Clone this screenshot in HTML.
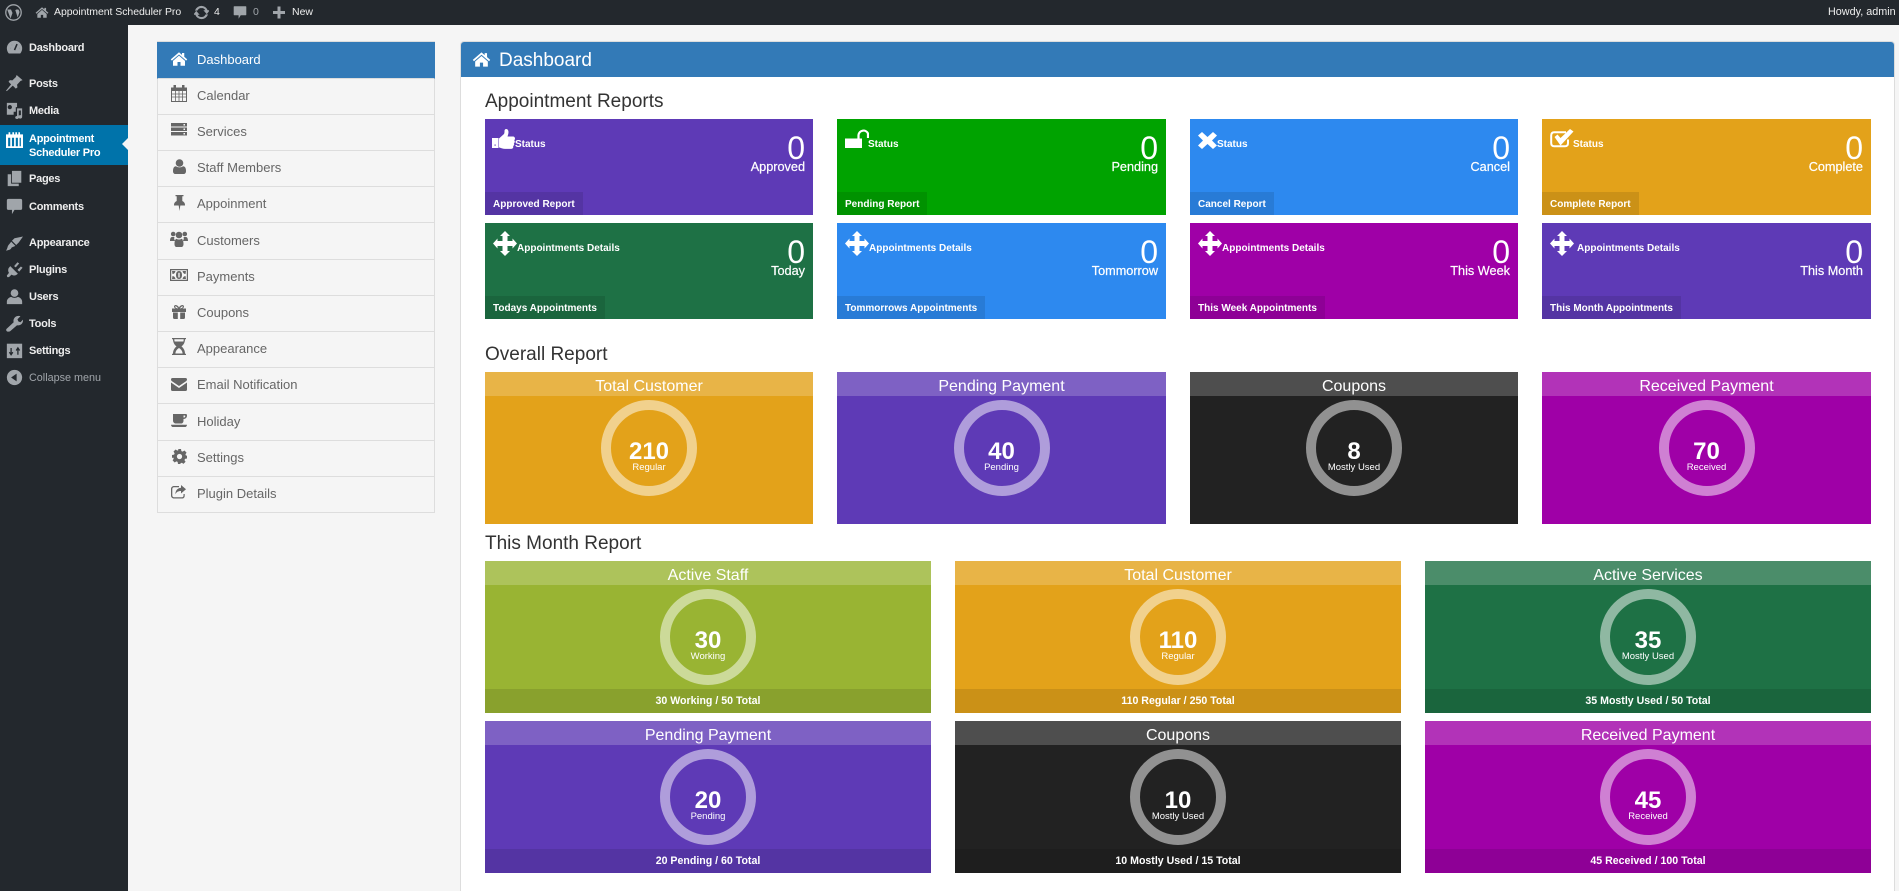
<!DOCTYPE html>
<html lang="en"><head><meta charset="utf-8"><title>Appointment Scheduler Pro</title>
<style>
html,body{margin:0;padding:0;width:1899px;height:891px;overflow:hidden;background:#f5f5f5;font-family:"Liberation Sans",Arial,sans-serif}
*{box-sizing:border-box}
.a{position:absolute}
svg{position:absolute;fill:currentColor;display:block}
.t{position:absolute;height:20px;line-height:20px;white-space:nowrap}
#bar{left:0;top:0;width:1899px;height:25px;background:#23282d;color:#a0a5aa}
#bar .t{font-size:10.5px;color:#eee;top:1.5px}
#side{left:0;top:25px;width:128px;height:866px;background:#23282d}
.m{left:29px;font-size:11px;font-weight:bold;color:#eee;letter-spacing:-.25px}
.mi{color:#a0a5aa;left:6px;width:17px;height:17px}
.li{position:absolute;left:157px;width:278px;background:#f5f5f5;border-style:solid;border-color:#ddd;border-width:0 1px 1px 1px}
.l{left:197px;font-size:13px;color:#666}
.ic{color:#666;left:170px;width:18px;height:18px}
.h2{left:485px;font-size:19px;color:#333}
.c{position:absolute;color:#fff;overflow:hidden}
.c svg{color:#fff}
.lb{position:absolute;font-size:10px;font-weight:bold;line-height:16px;white-space:nowrap}
.n{position:absolute;right:8px;font-size:32px;line-height:32px;top:13px}
.s{position:absolute;right:8px;font-size:12.7px;line-height:16px;top:40px;white-space:nowrap;-webkit-text-stroke:.2px #fff}
.f{position:absolute;left:0;bottom:0;height:23px;line-height:25px;padding:0 8px;font-size:10px;font-weight:bold;background:rgba(0,0,0,.1);white-space:nowrap}
.hd{position:absolute;left:0;top:0;right:0;height:24px;line-height:30px;text-align:center;font-size:16px;background:rgba(255,255,255,.2)}
.r{position:absolute;top:28px;left:50%;margin-left:-48px;width:96px;height:96px;border:10px solid rgba(255,255,255,.5);border-radius:50%;text-align:center}
.r b{position:absolute;left:-10px;right:-10px;top:28px;font-size:24px;line-height:28px}
.r span{position:absolute;left:-10px;right:-10px;top:52px;font-size:9.5px;line-height:12px}
.ft{position:absolute;left:0;right:0;bottom:0;height:24px;line-height:25px;text-align:center;font-size:10.6px;font-weight:bold;background:rgba(0,0,0,.1)}
</style></head><body>
<svg width="0" height="0" style="position:absolute">
<symbol id="home" viewBox="0 0 24 24"><path d="M12 3L1 12.5l1.5 1.7L12 6l9.500 8.200 1.500-1.700L19 9V4h-3v2.500zM12 7.500l-8 7V21h6v-5h4v5h6v-6.500z"/></symbol>
<symbol id="move" viewBox="0 0 24 25"><path d="M12 0l5 5H14.500V10h5V7.500l4.500 5-4.500 5V15h-5v5h2.500l-5 5-5-5h2.500v-5h-5v2.500L0 12.500l4.500-5V10h5V5H7z"/></symbol>
</svg>

<div class="a" id="bar">
 <svg style="left:5px;top:4px" width="17" height="17" viewBox="0 0 17 17"><circle cx="8.500" cy="8.500" r="7.700" fill="none" stroke="currentColor" stroke-width="1.300"/><path d="M2.200 5.500l3.300 9 2-5.500L6 5.500h5.500l-1.200.6 2.400 7.400 1.700-5c.3-1-.4-2-1-3z"/></svg>
 <svg style="left:35px;top:5px;color:#a0a5aa" width="14" height="15" viewBox="0 0 24 24"><use href="#home"/></svg>
 <div class="t" style="left:54px;font-size:10.5px;letter-spacing:-.05px">Appointment Scheduler Pro</div>
 <svg style="left:194px;top:5px" width="15" height="15" viewBox="0 0 20 20"><path stroke="currentColor" stroke-width=".9" d="M10 3.500a6.500 6.500 0 0 1 6 4h-2.500l3.500 4 3-4h-2A8.500 8.500 0 0 0 2 7h2.300A6.500 6.500 0 0 1 10 3.500zM10 16.500a6.500 6.500 0 0 1-6-4h2.500L3 8.500l-3 4h2A8.500 8.500 0 0 0 18 13h-2.300a6.500 6.500 0 0 1-5.700 3.500z"/></svg>
 <div class="t" style="left:214px">4</div>
 <svg style="left:233px;top:5px" width="14" height="15" viewBox="0 0 20 20"><path d="M2 1h16a1 1 0 0 1 1 1v11a1 1 0 0 1-1 1h-7l-3 5v-5H2a1 1 0 0 1-1-1V2a1 1 0 0 1 1-1z"/></svg>
 <div class="t" style="left:253px;color:#a0a5aa">0</div>
 <svg style="left:273px;top:6px" width="12" height="13" viewBox="0 0 12 12"><path d="M4.500 0h3v4.500H12v3H7.500V12h-3V7.500H0v-3h4.500z"/></svg>
 <div class="t" style="left:292px">New</div>
 <div class="t" style="left:1828px;font-size:10.8px">Howdy, admin</div>
</div>

<div class="a" id="side">
 <div class="a" style="left:0;top:100px;width:128px;height:40px;background:#0073aa"></div>
 <div class="a" style="left:122px;top:113px;width:0;height:0;border-style:solid;border-color:transparent #f5f5f5 transparent transparent;border-width:6px 6px 6px 0"></div>
</div>

<!-- wp icons -->
<svg class="mi" style="top:39px" viewBox="0 0 20 20"><path d="M10 2a9 9 0 0 0-9 9c0 2.500 1 4.500 2.300 6h13.400A9 9 0 0 0 19 11a9 9 0 0 0-9-9z"/><path d="M10 13l3-7M5 11h.1M15.500 11h.1M7 7h.1" stroke="#23282d" stroke-width="1.800" fill="none"/></svg>
<svg class="mi" style="top:75px" viewBox="0 0 20 20"><path d="M12.500 0l7 6-2.500 1-4 4.500.5 3-2 1.500-3.500-3.500L1 19l-1-.5 6-7.500-3-3 1.500-2 3 .3L11.500 2.500z"/></svg>
<svg class="mi" style="top:102px" viewBox="0 0 20 20"><path fill-rule="evenodd" d="M1 1h12v5h-1.500v5.500H9V15H1zM4.500 3.500a2.500 2.500 0 1 0 0 5 2.500 2.500 0 0 0 0-5z"/><path d="M13 7.500h6v10c0 1.200-1 2-2.200 2s-2.300-.8-2.300-2 1-2 2.300-2c.3 0 .5 0 .7.100V10H15v8.500c0 .8-.8 1.500-2 1.500s-2.200-.8-2.200-1.800 1-1.700 2.200-1.700z"/></svg>
<svg class="a mi" style="top:131px;color:#fff" viewBox="0 0 20 20"><path fill-rule="evenodd" d="M0 4h3V1.500h2V4h2.500V1.500h2V4h1.500V1.500h2V4h1.500V1.500h2V4H20v16H0zM2.500 8v10h2.500V8zM7 8v10h2.500V8zM11.500 8v10H14V8zM16 8v10h1.500V8z"/></svg>
<svg class="mi" style="top:170px" viewBox="0 0 20 20"><path d="M7 1h11v14H7zM2 5h4v11h9v3H2z"/></svg>
<svg class="mi" style="top:198px" viewBox="0 0 20 20"><path d="M3 1h14a2 2 0 0 1 2 2v9a2 2 0 0 1-2 2h-7l-3 5v-5H3a2 2 0 0 1-2-2V3a2 2 0 0 1 2-2z"/></svg>
<svg class="mi" style="top:234px" viewBox="0 0 20 20"><path d="M20 3L10 5 7 8l5 5 3-3zM6 9l5 5c-2.500 1.500-4 1-5 3-.7 1.300-3 2-6 2.500 2-2.500 1.500-4.500 3-6.500C4 11.500 5 11 6 9z"/></svg>
<svg class="mi" style="top:261px" viewBox="0 0 20 20"><path d="M5 6l9 9-2 1.500c-2 1-4 .5-5.500-.5L3.500 19H1.500l-.5-2 2.500-3c-1-1.500-1.300-3.500-.5-5.500zM9.500 6l4-4.500 2 1.500-4 4.500zM13.500 10.500l4-4 2 1.500-4 4.500z"/></svg>
<svg class="mi" style="top:288px" viewBox="0 0 20 20"><circle cx="10" cy="6" r="4.500"/><path d="M1 19v-3c0-3 3-5 5-5.500 2.500 1.500 5.500 1.500 8 0 2 .5 5 2.500 5 5.500v3z"/></svg>
<svg class="mi" style="top:315px" viewBox="0 0 20 20"><path d="M2.500 19.500a2 2 0 0 1-2-3L9 8.500C8 5 10.500 1 15 1c.8 0 1.500.2 2 .5L13.500 5l1 2.500L17 8.500 20 5.500c.5 4-3 7.500-7 6.500L5 19c-.7.500-1.500.7-2.500.5z"/></svg>
<svg class="mi" style="top:342px" viewBox="0 0 20 20"><path d="M1 2h18v17H1z"/><path d="M6 7v8M4 12l2 3 2-3M14 15V7M12 10l2-3 2 3" stroke="#23282d" stroke-width="1.500" fill="none"/></svg>
<svg class="mi" style="top:369px" viewBox="0 0 20 20"><circle cx="10" cy="10" r="9"/><path d="M12.500 5.500v9L6 10z" fill="#23282d"/></svg>

<div class="t m" style="top:38px">Dashboard</div>
<div class="t m" style="top:74px">Posts</div>
<div class="t m" style="top:101px">Media</div>
<div class="t m" style="top:129px;color:#fff">Appointment</div>
<div class="t m" style="top:143px;color:#fff">Scheduler Pro</div>
<div class="t m" style="top:169px">Pages</div>
<div class="t m" style="top:197px">Comments</div>
<div class="t m" style="top:233px">Appearance</div>
<div class="t m" style="top:260px">Plugins</div>
<div class="t m" style="top:287px">Users</div>
<div class="t m" style="top:314px">Tools</div>
<div class="t m" style="top:341px">Settings</div>
<div class="t m" style="top:368px;font-weight:normal;color:#a0a5aa;letter-spacing:0;font-size:10.8px">Collapse menu</div>

<!-- left list -->
<div class="a" style="left:157px;top:41px;width:278px;height:1px;background:#ddd"></div>
<div class="li" style="top:42px;height:37px;background:#337ab7;border-color:#337ab7 #337ab7 #ddd"></div>
<div class="li" style="top:79px;height:36px"></div>
<div class="li" style="top:115px;height:36px"></div>
<div class="li" style="top:151px;height:36px"></div>
<div class="li" style="top:187px;height:36px"></div>
<div class="li" style="top:223px;height:37px"></div>
<div class="li" style="top:260px;height:36px"></div>
<div class="li" style="top:296px;height:36px"></div>
<div class="li" style="top:332px;height:36px"></div>
<div class="li" style="top:368px;height:36px"></div>
<div class="li" style="top:404px;height:37px"></div>
<div class="li" style="top:441px;height:36px"></div>
<div class="li" style="top:477px;height:36px"></div>

<svg style="left:170px;top:50px;color:#fff" width="18" height="18" viewBox="0 0 24 24"><use href="#home"/></svg>
<svg class="ic" style="top:85px;width:16px;height:17px;left:171px" viewBox="0 0 16 17"><path fill-rule="evenodd" d="M0 2.500h2.500V0h2.500v2.500h6V0h2.500v2.500H16V17H0zM1 6v10h14V6z"/><path d="M1 9h14M1 12h14M4.500 6v10M8 6v10M11.500 6v10" stroke="#666" stroke-width=".8" fill="none"/></svg>
<svg class="ic" style="top:123px;width:16px;height:13px;left:171px" viewBox="0 0 16 13"><path fill-rule="evenodd" d="M0 0h16v3.500H0zM12.500 1v1.500H14V1zM0 4.500h16V8H0zM12.500 5.500V7H14V5.500zM0 9h16v3.500H0zM12.500 10v1.500H14V10z"/></svg>
<svg class="ic" style="top:159px;width:13px;height:15px;left:172.500px" viewBox="0 0 13 15"><circle cx="6.500" cy="4" r="3.800"/><path d="M0 12c0-3 1-4.500 3-4.700 2 1.500 5 1.500 7 0 2 .2 3 1.700 3 4.700 0 2-1 3-2.500 3h-8C1 15 0 14 0 12z"/></svg>
<svg class="ic" style="top:195px;width:11px;height:16px;left:174px" viewBox="0 0 11 16"><path d="M1.500 0h8v1.300H8.300V6c1.500.8 2.700 2 2.700 3.700V10.500H6.300L5.500 16 4.700 10.500H0V9.700C0 8 1.200 6.800 2.700 6V1.300H1.500z"/></svg>
<svg class="ic" style="top:231px;width:18px;height:16px;left:170px" viewBox="0 0 18 16"><circle cx="3.200" cy="3" r="2.300"/><circle cx="14.800" cy="3" r="2.300"/><circle cx="9" cy="4" r="3.300"/><path d="M0 10c0-2.500.8-4 2-4h2.500c-.5 1-.5 2.800 1 4H0zM18 10c0-2.500-.8-4-2-4h-2.500c.5 1 .5 2.800-1 4zM4.500 13c0-3 .8-5 2-5.300 1.500 1 3.500 1 5 0 1.200.3 2 2.300 2 5.300 0 2-1 3-2 3H6.500c-1 0-2-1-2-3z"/></svg>
<svg class="ic" style="top:269px;width:18px;height:12px;left:170px" viewBox="0 0 18 12"><path fill-rule="evenodd" d="M0 0h18v12H0zM1.200 1.200v9.600h15.600V1.200z"/><path d="M2 2h3.500C5 4 4 5 2.500 5zM16 2h-3.500c.5 2 1.500 3 3 3zM2 10h3.500C5 8 4 7 2.500 7zM16 10h-3.500c.5-2 1.500-3 3-3z"/><path fill-rule="evenodd" d="M9 2c2 0 3 1.800 3 4s-1 4-3 4-3-1.800-3-4 1-4 3-4zM8.300 3.800V8.500h1.400V3.800z"/></svg>
<svg class="ic" style="top:305px;width:14px;height:14px;left:172px" viewBox="0 0 14 14"><path fill-rule="evenodd" d="M0 3.500h3.500C2.500 3 2 2.200 2 1.500 2 .7 2.700 0 3.700 0 5 0 6.300 1.200 7 2.500 7.700 1.200 9 0 10.300 0c1 0 1.700.7 1.700 1.500 0 .7-.5 1.500-1.500 2H14V7H0zM3.500 1.300c-.5 0-.5.8.3 1.500.4.300 1.500.6 2.200.7C5.500 2.500 4.500 1.300 3.500 1.300zM10.500 1.300c-1 0-2 1.200-2.500 2.200.7-.1 1.800-.4 2.200-.7.8-.7.8-1.500.3-1.500z"/><path d="M1 7.500h4.800V14H2.500C1.500 14 1 13.400 1 12.500zM8.200 7.500H13v5c0 .9-.5 1.500-1.500 1.500H8.200z"/></svg>
<svg class="ic" style="top:338px;width:14px;height:17px;left:172px" viewBox="0 0 14 17"><path fill-rule="evenodd" d="M0 0h14v1.300h-1c0 3-1.300 5.500-3.500 7.200 2.200 1.700 3.500 4.200 3.500 7.200h1V17H0v-1.300h1c0-3 1.300-5.500 3.500-7.200C2.300 6.800 1 4.300 1 1.300H0zM2.300 1.300c0 .8.100 1.500.3 2.200h8.800c.2-.7.300-1.400.3-2.200zM7 10c-2 1.300-3.500 3-3.600 5.500h7.200C10.500 13 9 11.300 7 10z"/></svg>
<svg class="ic" style="top:378px;width:16px;height:13px;left:171px" viewBox="0 0 16 13"><path d="M0 1.500C0 .5.600 0 1.500 0h13c.9 0 1.500.5 1.500 1.500 0 .7-.4 1.300-1 1.700L8 8 1 3.200C.4 2.800 0 2.200 0 1.500zM0 4.500L8 10l8-5.500v7c0 1-.6 1.500-1.500 1.500h-13C.6 13 0 12.500 0 11.500z"/></svg>
<svg class="ic" style="top:414px;width:16px;height:13px;left:171px" viewBox="0 0 16 13"><path fill-rule="evenodd" d="M2 0h13c.7 0 1 .7 1 1.500 0 2-1.300 3.500-3.500 3.500v1.500c0 2-1 3-2.500 3H5c-1.500 0-3-1-3-3zM12.500 1.500v2c1 0 1.800-.5 1.800-1.300 0-.5-.3-.7-.7-.7z"/><path d="M0 10.700h16c0 1-.8 2.300-2 2.300H2c-1.200 0-2-1.300-2-2.300z"/></svg>
<svg class="ic" style="top:449px;width:15px;height:15px;left:172px" viewBox="0 0 20 20"><path fill-rule="evenodd" d="M8 0h4l.5 2.800 1.700.7L16.600 2l2.800 2.800-1.500 2.300.7 1.700L20 8.800v3.800l-2.600.5-.8 1.700 1.500 2.200-2.800 2.800-2.200-1.500-1.700.7L11 20H8l-.5-2.800-1.700-.7-2.200 1.500-2.800-2.800 1.500-2.200-.7-1.700L0 12V8l2.800-.5.7-1.700L2 3.400 4.800.6l2.300 1.500 1.700-.7zM10 6.500a3.500 3.500 0 1 0 0 7 3.500 3.500 0 0 0 0-7z"/></svg>
<svg class="ic" style="top:485px;width:15px;height:14px;left:171px" viewBox="0 0 15 14"><path fill-rule="evenodd" d="M3 1h5v1.200H3C2 2.200 1.300 3 1.300 4v6.500c0 1 .7 1.700 1.700 1.700h8c1 0 1.500-.7 1.500-1.700V9h1.200v1.500c0 2-1 3-2.700 3H3c-1.700 0-3-1.200-3-3V4C0 2.300 1.300 1 3 1z"/><path d="M10 0l5 4.200-5 4.300V6C7 6 5.500 7 4.300 9.300 4.500 6 6 3 10 2.700z"/></svg>

<div class="t l" style="top:50px;color:#fff">Dashboard</div>
<div class="t l" style="top:86px">Calendar</div>
<div class="t l" style="top:122px">Services</div>
<div class="t l" style="top:158px">Staff Members</div>
<div class="t l" style="top:194px">Appoinment</div>
<div class="t l" style="top:231px">Customers</div>
<div class="t l" style="top:267px">Payments</div>
<div class="t l" style="top:303px">Coupons</div>
<div class="t l" style="top:339px">Appearance</div>
<div class="t l" style="top:375px">Email Notification</div>
<div class="t l" style="top:412px">Holiday</div>
<div class="t l" style="top:448px">Settings</div>
<div class="t l" style="top:484px">Plugin Details</div>

<!-- main panel -->
<div class="a" style="left:460px;top:41px;width:1435px;height:850px;background:#fff;border:1px solid #ddd;border-bottom:0;border-radius:4px 4px 0 0"></div>
<div class="a" style="left:461px;top:42px;width:1433px;height:35px;background:#337ab7;border-radius:3px 3px 0 0"></div>
<svg style="left:472px;top:50px;color:#fff" width="19" height="19" viewBox="0 0 24 24"><use href="#home"/></svg>
<div class="t" style="left:499px;top:51px;font-size:19px;color:#fff">Dashboard</div>

<div class="t h2" style="top:92px">Appointment Reports</div>
<div class="t h2" style="top:345px">Overall Report</div>
<div class="t h2" style="top:534px">This Month Report</div>

<!-- report cards row 1 -->
<div class="c" style="left:485px;top:119px;width:328px;height:96px;background:#5e3ab6">
 <svg style="left:7px;top:10px" width="23" height="21" viewBox="0 0 23 21"><path d="M0 9h6.500v10H0zM7 9.500L12 5c.5-1 .5-2 .5-3 0-1 .5-2 1.800-2s2.200 1.500 2.200 3-.5 3-1 4.500h5.500c1.200 0 2 1 2 2 0 .7-.3 1.300-.8 1.700.4.400.6.900.6 1.400 0 .7-.4 1.300-1 1.600.3.400.4.800.4 1.200 0 .8-.5 1.400-1.100 1.700.1.200.2.500.2.800 0 1.200-1 2-2.300 2H13c-2 0-4-1-6-1.500z"/><rect x="2.500" y="15.500" width="1.200" height="1.200" fill="#5e3ab6"/></svg>
 <div class="lb" style="left:30px;top:18px">Status</div><div class="n">0</div><div class="s">Approved</div><div class="f">Approved Report</div></div>
<div class="c" style="left:837px;top:119px;width:329px;height:96px;background:#00a300">
 <svg style="left:8px;top:10px" width="24" height="19" viewBox="0 0 24 19"><path d="M0 9.500h17V19H0z"/><path d="M13.500 9.500V6a5 5 0 0 1 9.500-1.500V9" fill="none" stroke="#fff" stroke-width="2.200"/></svg>
 <div class="lb" style="left:31px;top:18px">Status</div><div class="n">0</div><div class="s">Pending</div><div class="f">Pending Report</div></div>
<div class="c" style="left:1190px;top:119px;width:328px;height:96px;background:#2d89ef">
 <svg style="left:8px;top:13px" width="19" height="17" viewBox="0 0 19 17"><path d="M4 0l5.500 5L15 0l4 3.500-5 5 5 5-4 3.500-5.500-5L4 17l-4-3.500 5-5-5-5z"/></svg>
 <div class="lb" style="left:27px;top:18px">Status</div><div class="n">0</div><div class="s">Cancel</div><div class="f">Cancel Report</div></div>
<div class="c" style="left:1542px;top:119px;width:329px;height:96px;background:#e3a21a">
 <svg style="left:8px;top:10px" width="24" height="19" viewBox="0 0 24 19"><path d="M18 10.500V14c0 2-1 3.300-3 3.300H4.200c-2 0-3-1.300-3-3.300V6.500c0-2 1-3.300 3-3.300H16" fill="none" stroke="#fff" stroke-width="2"/><path d="M4.500 8L7.500 5.500l3 3.500L20 0l3.500 2.500-13 14z"/></svg>
 <div class="lb" style="left:31px;top:18px">Status</div><div class="n">0</div><div class="s">Complete</div><div class="f">Complete Report</div></div>

<!-- report cards row 2 -->
<div class="c" style="left:485px;top:223px;width:328px;height:96px;background:#1e7145">
 <svg style="left:8px;top:8px" width="24" height="25" viewBox="0 0 24 25"><use href="#move"/></svg>
 <div class="lb" style="left:32px;top:18px">Appointments Details</div><div class="n">0</div><div class="s">Today</div><div class="f">Todays Appointments</div></div>
<div class="c" style="left:837px;top:223px;width:329px;height:96px;background:#2d89ef">
 <svg style="left:8px;top:8px" width="24" height="25" viewBox="0 0 24 25"><use href="#move"/></svg>
 <div class="lb" style="left:32px;top:18px">Appointments Details</div><div class="n">0</div><div class="s">Tommorrow</div><div class="f">Tommorrows Appointments</div></div>
<div class="c" style="left:1190px;top:223px;width:328px;height:96px;background:#9f00a7">
 <svg style="left:8px;top:8px" width="24" height="25" viewBox="0 0 24 25"><use href="#move"/></svg>
 <div class="lb" style="left:32px;top:18px">Appointments Details</div><div class="n">0</div><div class="s">This Week</div><div class="f">This Week Appointments</div></div>
<div class="c" style="left:1542px;top:223px;width:329px;height:96px;background:#5e3ab6">
 <svg style="left:8px;top:8px" width="24" height="25" viewBox="0 0 24 25"><use href="#move"/></svg>
 <div class="lb" style="left:35px;top:18px">Appointments Details</div><div class="n">0</div><div class="s">This Month</div><div class="f">This Month Appointments</div></div>

<!-- overall -->
<div class="c" style="left:485px;top:372px;width:328px;height:152px;background:#e3a21a"><div class="hd">Total Customer</div><div class="r"><b>210</b><span>Regular</span></div></div>
<div class="c" style="left:837px;top:372px;width:329px;height:152px;background:#5e3ab6"><div class="hd">Pending Payment</div><div class="r"><b>40</b><span>Pending</span></div></div>
<div class="c" style="left:1190px;top:372px;width:328px;height:152px;background:#222"><div class="hd">Coupons</div><div class="r"><b>8</b><span>Mostly Used</span></div></div>
<div class="c" style="left:1542px;top:372px;width:329px;height:152px;background:#9f00a7"><div class="hd">Received Payment</div><div class="r"><b>70</b><span>Received</span></div></div>

<!-- month -->
<div class="c" style="left:485px;top:561px;width:446px;height:152px;background:#99b433"><div class="hd">Active Staff</div><div class="r"><b>30</b><span>Working</span></div><div class="ft">30 Working / 50 Total</div></div>
<div class="c" style="left:955px;top:561px;width:446px;height:152px;background:#e3a21a"><div class="hd">Total Customer</div><div class="r"><b>110</b><span>Regular</span></div><div class="ft">110 Regular / 250 Total</div></div>
<div class="c" style="left:1425px;top:561px;width:446px;height:152px;background:#1e7145"><div class="hd">Active Services</div><div class="r"><b>35</b><span>Mostly Used</span></div><div class="ft">35 Mostly Used / 50 Total</div></div>
<div class="c" style="left:485px;top:721px;width:446px;height:152px;background:#5e3ab6"><div class="hd">Pending Payment</div><div class="r"><b>20</b><span>Pending</span></div><div class="ft">20 Pending / 60 Total</div></div>
<div class="c" style="left:955px;top:721px;width:446px;height:152px;background:#222"><div class="hd">Coupons</div><div class="r"><b>10</b><span>Mostly Used</span></div><div class="ft">10 Mostly Used / 15 Total</div></div>
<div class="c" style="left:1425px;top:721px;width:446px;height:152px;background:#9f00a7"><div class="hd">Received Payment</div><div class="r"><b>45</b><span>Received</span></div><div class="ft">45 Received / 100 Total</div></div>
</body></html>
